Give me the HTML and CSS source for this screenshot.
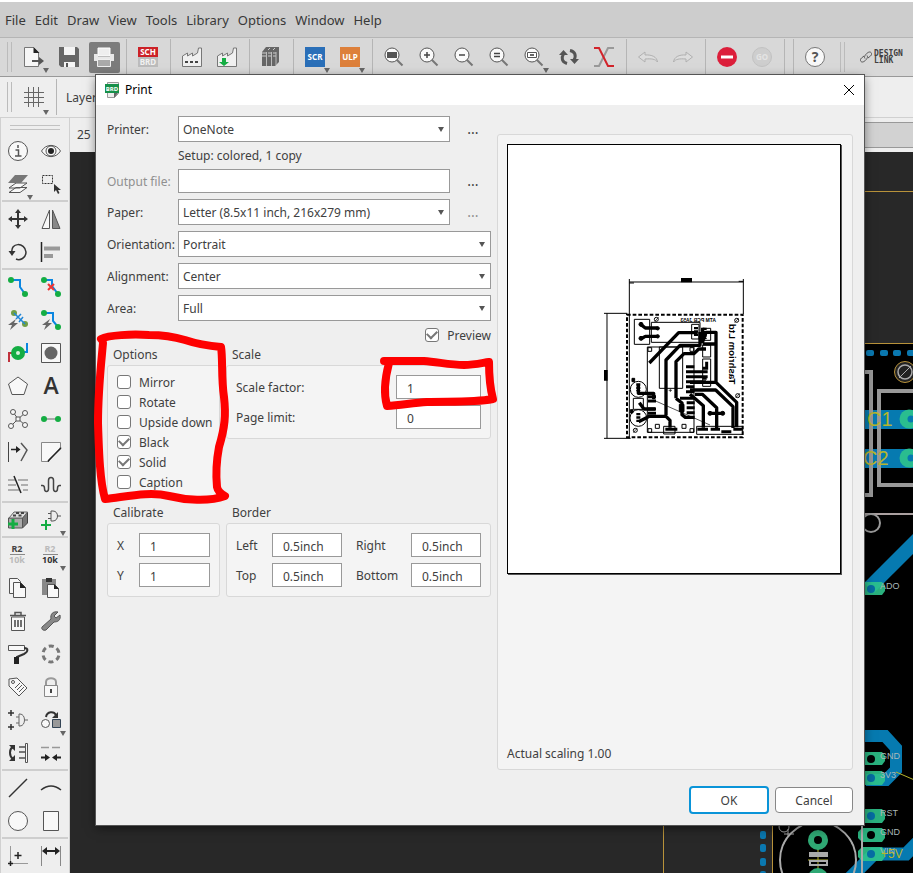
FILE: index.html
```html
<!DOCTYPE html>
<html lang="en">
<head>
<meta charset="utf-8">
<title>Print</title>
<link rel="stylesheet" href="styles.css">
</head>
<body>
<nav class="menubar">
  <a href="#">File</a><a href="#">Edit</a><a href="#">Draw</a><a href="#">View</a><a href="#">Tools</a><a href="#">Library</a><a href="#">Options</a><a href="#">Window</a><a href="#">Help</a>
</nav>

<div class="toolbar">
  <i class="grip"></i>
  <button class="tool more" aria-label="Open"><svg viewBox="0 0 20 20"><path d="M.5.5h9l5 5v14H.5z" fill="#f6f6f6" stroke="#777"/><path d="M9.500 0l6 6h-6z" fill="#222"/><path d="M8 14h9" stroke="#555" stroke-width="2"/><path d="M15 10l5 4-5 4z" fill="#555"/></svg></button>
  <button class="tool" aria-label="Save"><svg viewBox="0 0 20 20"><path d="M0 0h18l2 2v18H2l-2-2z" fill="#666"/><path d="M5 0h11v8H5zM5 15h11v5H5z" fill="#f4f4f4"/><path d="M7 16h2v4H7z" fill="#555"/></svg></button>
  <button class="tool pressed" aria-label="Print"><svg viewBox="0 0 20 20"><path d="M4 1h12v8H4z" fill="#eee" stroke="#fff"/><path d="M0 7h4v3h12V7h4v7H0z" fill="#e8e8e8"/><path d="M3.500 12.500h13v7h-13z" fill="#aaa" stroke="#eee"/></svg></button>
  <i class="sep"></i>
  <button class="tool" aria-label="Schematic"><svg viewBox="0 0 20 20"><path d="M0 0h20v10H0z" fill="#cc2127"/><path d="M0 10h20v10H0z" fill="#bcbcbc"/><text class="tiny" x="10" y="8" fill="#fff">SCH</text><text class="tiny" x="10" y="18" fill="#f2f2f2">BRD</text></svg></button>
  <i class="sep"></i>
  <button class="tool" aria-label="Manufacturing"><svg viewBox="0 0 20 20"><path d="M.5 19.500V9l5-3v3l5-3v3l5-3 1-5h3v18.500z" fill="#f0f0f0" stroke="#777"/><path d="M3 15h14" stroke="#444" stroke-width="2" stroke-dasharray="3 2"/></svg></button>
  <button class="tool" aria-label="Export"><svg viewBox="0 0 20 20"><path d="M.5 19.500V9l5-3v3l5-3v3l5-3 1-5h3v18.500z" fill="#f0f0f0" stroke="#777"/><path d="M5 11h4v4h3l-5 4-5-4h3z" fill="#14ad43"/></svg></button>
  <i class="sep"></i>
  <button class="tool" aria-label="Library"><svg viewBox="0 0 20 20"><path d="M1 5l4-5h13v15l-4 4H1z" fill="#666"/><path d="M1 6h4M7 6h3M12 6h3M1 9h4M7 9h3M12 9h3M7 3l2-2M12 3l2-2" stroke="#ccc"/><path d="M5.500 5v14M10.500 5v14M15 5v13" stroke="#bbb"/></svg></button>
  <i class="sep"></i>
  <button class="tool more" aria-label="Script"><svg viewBox="0 0 20 20"><path d="M0 0h20v20H0z" fill="#2a6fb8"/><text class="tiny" x="10" y="13" fill="#fff">SCR</text></svg></button>
  <button class="tool more" aria-label="User program"><svg viewBox="0 0 20 20"><path d="M0 0h20v20H0z" fill="#dd803b"/><text class="tiny" x="10" y="13" fill="#fff">ULP</text></svg></button>
  <i class="sep"></i>
  <button class="tool" aria-label="Zoom to fit"><svg viewBox="0 0 20 20"><path d="M13 13l5.500 5.500" stroke="#777" stroke-width="2"/><circle cx="8" cy="8" r="7" fill="#fafafa" stroke="#555"/><path d="M3 5h10v6H3z" fill="#555"/></svg></button>
  <button class="tool" aria-label="Zoom in"><svg viewBox="0 0 20 20"><path d="M13 13l5.500 5.500" stroke="#777" stroke-width="2"/><circle cx="8" cy="8" r="7" fill="#fafafa" stroke="#555"/><path d="M5 8h6M8 5v6" stroke="#444" stroke-width="1.500"/></svg></button>
  <button class="tool" aria-label="Zoom out"><svg viewBox="0 0 20 20"><path d="M13 13l5.500 5.500" stroke="#777" stroke-width="2"/><circle cx="8" cy="8" r="7" fill="#fafafa" stroke="#555"/><path d="M5 8h6" stroke="#444" stroke-width="1.500"/></svg></button>
  <button class="tool" aria-label="Redraw"><svg viewBox="0 0 20 20"><path d="M13 13l5.500 5.500" stroke="#777" stroke-width="2"/><circle cx="8" cy="8" r="7" fill="#fafafa" stroke="#555"/><path d="M5 6.500h6M5 9.500h6" stroke="#444" stroke-width="1.500"/></svg></button>
  <button class="tool more" aria-label="Zoom select"><svg viewBox="0 0 20 20"><path d="M13 13l5.500 5.500" stroke="#777" stroke-width="2"/><circle cx="8" cy="8" r="7" fill="#fafafa" stroke="#555"/><path d="M3.500 5.500h9v5h-9z" fill="#fff" stroke="#555"/><path d="M6 7h4v2H6z" fill="#666"/></svg></button>
  <button class="tool" aria-label="Refresh"><svg viewBox="0 0 20 20"><path d="M8 16.500C3 15 2 11 4.500 7M11 3.500c5 1 6.500 5 4 9.500" fill="none" stroke="#555" stroke-width="3"/><path d="M0 8l4.500-5L9 8zM11 12h9l-4.500 5z" fill="#555"/></svg></button>
  <button class="tool" aria-label="Cross probe"><svg viewBox="0 0 20 20"><path d="M0 19h5L14 1h6" fill="none" stroke="#999" stroke-width="2"/><path d="M0 1h5l9 18h6" fill="none" stroke="#d2232a" stroke-width="2"/></svg></button>
  <i class="sep"></i>
  <button class="tool" aria-label="Undo"><svg viewBox="0 0 20 20"><path d="M.5 10L7 5v3c7-.5 12 2 12.500 7-2-3-6-3.500-12.500-3v3z" fill="#ddd" stroke="#b0b0b0"/></svg></button>
  <button class="tool" aria-label="Redo"><svg viewBox="0 0 20 20"><path d="M19.500 10L13 5v3C6 7.500 1 10 .5 15c2-3 6-3.500 12.500-3v3z" fill="#ddd" stroke="#b0b0b0"/></svg></button>
  <i class="sep"></i>
  <button class="tool" aria-label="Stop"><svg viewBox="0 0 20 20"><circle cx="10" cy="10" r="10" fill="#dc1f3b"/><path d="M4 10h12" stroke="#fff" stroke-width="3"/></svg></button>
  <button class="tool" aria-label="Go"><svg viewBox="0 0 20 20"><circle cx="10" cy="10" r="9.500" fill="#cecece" stroke="#c2c2c2"/><text class="tiny go" x="10" y="13">GO</text></svg></button>
  <i class="sep"></i>
  <i class="sep"></i>
  <button class="tool" aria-label="Help"><svg viewBox="0 0 20 20"><circle cx="10" cy="10" r="9.500" fill="#f8f8f8" stroke="#777"/><text class="query" x="10" y="15">?</text></svg></button>
  <i class="grip last"></i>
  <button class="designlink"><svg viewBox="0 0 12 12"><path d="M5 7.500c-2-2 2.500-6.500 4.500-6.500s3 2 1 4L8 7M7 4.500c2 2-2.500 6.500-4.500 6.500s-3-2-1-4L4 5" fill="none" stroke="#555"/></svg><span>DESIGN<br>LINK</span></button>
</div>

<div class="parambar">
  <i class="grip"></i>
  <button class="tool more" aria-label="Grid"><svg viewBox="0 0 20 20"><path d="M4.500 0v20M9.500 0v20M14.500 0v20M0 5.500h20M0 10.500h20M0 15.500h20" stroke="#666" fill="none"/></svg></button>
  <i class="sep"></i>
  <span class="layer">Layer:</span>
</div>

<div class="main">
<aside class="sidebar">
  <i class="hgrip"></i>
  <div class="group">
    <button aria-label="Info"><svg viewBox="0 0 20 20"><circle cx="10" cy="10" r="9.500" class="w"/><path d="M10 4v3M7.500 9H10.500v6M7 15h6.500" fill="none" stroke="#555" stroke-width="1.500"/></svg></button>
    <button aria-label="Show"><svg viewBox="0 0 20 20"><path d="M.5 10C5 2.500 15 2.500 19.500 10 15 17.500 5 17.500.5 10z" class="w"/><circle cx="10" cy="10" r="5" class="w"/><circle cx="10" cy="10" r="3" fill="#222"/></svg></button>
    <button class="more" aria-label="Layers"><svg viewBox="0 0 20 20"><path d="M1 18.500l7-5h11l-7 5zM1 14l7-5h11l-7 5z" class="w"/><path d="M0 9l7-8h13l-7 8z" fill="#777"/></svg></button>
    <button aria-label="Group"><svg viewBox="0 0 20 20"><path d="M1.500 1.500h10v8h-10z" fill="none" stroke="#333" stroke-dasharray="2 1"/><path d="M13 10v8l2-2 2 4 1.500-1-1.500-3h3z" fill="#333"/></svg></button>
  </div>
  <div class="group">
    <button aria-label="Move"><svg viewBox="0 0 20 20"><path d="M10 2v16M2 10h16" stroke="#333" stroke-width="2"/><path d="M10 0l3 4H7zM10 20l3-4H7zM0 10l4-3v6zM20 10l-4-3v6z" fill="#333"/></svg></button>
    <button aria-label="Mirror"><svg viewBox="0 0 20 20"><path d="M8.500 1v18.500H1z" class="w"/><path d="M11.500 1v18.500H19z" fill="#888" stroke="#555"/></svg></button>
    <button aria-label="Rotate"><svg viewBox="0 0 20 20"><path d="M4 11C2 0 17 0 18 10c0 6-6 9-10 7" fill="none" stroke="#333" stroke-width="1.500"/><path d="M.5 9h7L4 14z" fill="#333"/></svg></button>
    <button aria-label="Align"><svg viewBox="0 0 20 20"><path d="M.5 0v20" stroke="#222" stroke-width="1.500"/><path d="M3 4.500h16v4H3zM3 12h9v4H3z" fill="#999"/></svg></button>
  </div>
  <div class="group">
    <button aria-label="Route"><svg viewBox="0 0 20 20"><path d="M3 3h9v7l5 7" class="b"/><circle cx="3" cy="3" r="3" class="g"/><circle cx="17" cy="17" r="3" class="g"/></svg></button>
    <button aria-label="Ripup"><svg viewBox="0 0 20 20"><path d="M3 3h8v6l6 8" class="b"/><circle cx="3" cy="3" r="3" class="g"/><circle cx="17" cy="17" r="3" class="g"/><path d="M7 7l6 6M13 7l-6 6" stroke="#e33" stroke-width="2"/></svg></button>
    <button aria-label="Autoroute"><svg viewBox="0 0 20 20"><circle cx="6" cy="3" r="3" fill="#6f9e46"/><circle cx="17" cy="14" r="3" fill="#6f9e46"/><path d="M6 3l11 11M8 9l5-5M11 12l4-5" stroke="#1f86d8" stroke-width="1.500"/><path d="M8 9l-8 6h4l-2 5 8-7H6z" fill="#666"/></svg></button>
    <button aria-label="Fast route"><svg viewBox="0 0 20 20"><path d="M3 3h9v8l5 6" class="b"/><circle cx="3" cy="3" r="3" class="g"/><circle cx="17" cy="17" r="3" class="g"/><path d="M9 9l-8 6h4l-2 5 8-7H7z" fill="#666"/></svg></button>
    <button aria-label="Via"><svg viewBox="0 0 20 20"><path d="M1 19v-9h6" fill="none" stroke="#c0323c" stroke-width="2"/><path d="M13 9h6V0" class="b"/><circle cx="10" cy="10" r="7" fill="#14ad43"/><circle cx="10" cy="10" r="2" fill="#d8f0dd"/></svg></button>
    <button aria-label="Hole"><svg viewBox="0 0 20 20"><path d="M.5.5h19v19H.5z" class="w"/><circle cx="10" cy="10" r="6.500" fill="#666"/></svg></button>
    <button aria-label="Polygon"><svg viewBox="0 0 20 20"><path d="M10 1l9.500 7L16 18.500H4L.5 8z" class="w"/></svg></button>
    <button aria-label="Text"><svg viewBox="0 0 20 20"><text class="big" x="10" y="18">A</text></svg></button>
    <button aria-label="Ratsnest"><svg viewBox="0 0 20 20"><path d="M5 3l5 7 7-6M3 17l7-7 7 6" fill="none" stroke="#555"/><circle cx="5" cy="3" r="2.500" class="w"/><circle cx="17" cy="4" r="2.500" class="w"/><circle cx="3" cy="17" r="2.500" class="w"/><circle cx="17" cy="16" r="2.500" class="w"/><path d="M8 8h4v4H8z" class="w"/></svg></button>
    <button aria-label="Signal"><svg viewBox="0 0 20 20"><path d="M3 10h14" stroke="#aaa" stroke-width="2"/><circle cx="3" cy="10" r="3" class="g"/><circle cx="17" cy="10" r="3" class="g"/></svg></button>
    <button aria-label="Split"><svg viewBox="0 0 20 20"><path d="M.5 0v20" stroke="#444"/><path d="M13 1l6 7-6 11" fill="none" stroke="#555" stroke-width="1.500"/><path d="M3 7.500h7" stroke="#222" stroke-width="1.500"/><path d="M8 4l4.500 3.500L8 11z" fill="#222"/></svg></button>
    <button aria-label="Miter"><svg viewBox="0 0 20 20"><path d="M.5 19.500V.5h19v5l-12 14z" fill="#f8f8f8" stroke="#888"/><path d="M19.500 5.500v1L8 18l-1 1.500" fill="none" stroke="#222" stroke-width="1.500"/></svg></button>
    <button aria-label="Break"><svg viewBox="0 0 20 20"><path d="M0 5h7M10 5h10M0 10h8M13 10h7M0 15h11M15 15h5" stroke="#999" stroke-width="1.500"/><path d="M6 1l7 17" stroke="#222" stroke-width="1.500"/></svg></button>
    <button aria-label="Meander"><svg viewBox="0 0 20 20"><path d="M0 10.500h1.500q2 0 2 3t2 3 2-3v-8q0-3 2.500-3t2.500 3v8q0 3 2 3t2-3 2-3H20" fill="none" stroke="#444" stroke-width="1.500"/></svg></button>
  </div>
  <div class="group">
    <button aria-label="Add part"><svg viewBox="0 0 20 20"><path d="M14.500 8l5-6v11l-5 5z" fill="#777" stroke="#444"/><path d="M.5 8h14v10H.5z" fill="#aaa" stroke="#555"/><path d="M1 8l5-6h13.500l-5 6z" fill="#ddd" stroke="#666"/><path d="M5 5.500h3M10.500 5.500h3M8 3h3M13 3h3" stroke="#444" stroke-width="2"/><path d="M5 9v10M0 14h10" stroke="#14ad43" stroke-width="3"/></svg></button>
    <button class="more" aria-label="Add gate"><svg viewBox="0 0 20 20"><path d="M10 1h2c6 0 6 10 0 10h-2zM7 3.500h3M7 8.500h3M17 6h3" fill="none" stroke="#555"/><path d="M5 10v10M0 15h10" stroke="#14ad43" stroke-width="2"/></svg></button>
  </div>
  <div class="group">
    <button aria-label="Name"><svg viewBox="0 0 20 20"><text class="part" x="9" y="7" fill="#444">R2</text><path d="M2 9.500h15" stroke="#888"/><text class="part" x="9" y="18" fill="#bbb">10k</text></svg></button>
    <button class="more" aria-label="Value"><svg viewBox="0 0 20 20"><text class="part" x="9" y="7" fill="#bbb">R2</text><path d="M2 9.500h15" stroke="#888"/><text class="part" x="9" y="18" fill="#333">10k</text></svg></button>
    <button aria-label="Copy"><svg viewBox="0 0 20 20"><path d="M1.500.5h8l3 3v12h-11z" class="w"/><path d="M5.500 4.500h7l5 5v10h-12z" class="w"/><path d="M12 4l6 6h-6z" fill="#222"/></svg></button>
    <button aria-label="Paste"><svg viewBox="0 0 20 20"><path d="M1 1h14v16H1z" fill="#888"/><path d="M5 0h6v4H5z" fill="#333"/><path d="M6.500 6.500h7l4 4v9h-11z" class="w"/><path d="M13 6l5 5h-5z" fill="#222"/></svg></button>
    <button aria-label="Delete"><svg viewBox="0 0 20 20"><path d="M3.500 6h13v13.500h-13z" class="w"/><path d="M2 4.500h16M7 4V1.500h6V4" fill="none" stroke="#555" stroke-width="1.500"/><path d="M7 9v7M10 9v7M13 9v7" stroke="#444" stroke-width="1.500"/></svg></button>
    <button aria-label="Change"><svg viewBox="0 0 20 20"><path d="M1 16L10 8C9 3 12 0 17 1l-4 4 2 2 4-3c1 5-2 7-6 7L5 19c-3 1-5-1-4-3z" fill="#888" stroke="#555"/></svg></button>
    <button aria-label="Paint"><svg viewBox="0 0 20 20"><path d="M.5 1.500h16v5H.5z" class="w"/><path d="M16 4c5 0 4 4 0 6l-7 3v2" fill="none" stroke="#333" stroke-width="2"/><path d="M6 13h5v7H6z" fill="#222"/></svg></button>
    <button aria-label="Optimize"><svg viewBox="0 0 20 20"><circle cx="10" cy="10" r="8" fill="none" stroke="#777" stroke-width="3" stroke-dasharray="5 3.378" stroke-dashoffset="-1.700"/></svg></button>
    <button aria-label="Tag"><svg viewBox="0 0 20 20"><path d="M1 2l8-1 10 10-8 8L1 9z" class="w"/><circle cx="5" cy="5" r="1.500" class="w"/><path d="M7 11l5-5M9 13l5-5M11 15l5-5" stroke="#555"/></svg></button>
    <button aria-label="Lock"><svg viewBox="0 0 20 20"><path d="M5 9V5c0-5 10-5 10 0v4" fill="none" stroke="#999" stroke-width="2"/><path d="M3.500 8.500h13v11h-13z" fill="#f8f8f8" stroke="#888"/><path d="M10 12v4" stroke="#444" stroke-width="2"/></svg></button>
    <button aria-label="Pin swap"><svg viewBox="0 0 20 20"><path d="M3 0v6M0 3h6M3 14v6M0 17h6" stroke="#333" stroke-width="1.500"/><path d="M11 4h1c6 0 6 12 0 12h-1zM8 7h3M8 13h3M17 10h3" fill="none" stroke="#666"/></svg></button>
    <button class="more" aria-label="Replace"><svg viewBox="0 0 20 20"><path d="M5 7c1-6 8-6 10-2" fill="none" stroke="#333" stroke-width="2"/><path d="M17 2v6h-6z" fill="#333"/><circle cx="4.500" cy="13.500" r="4" class="w"/><path d="M11.500 9.500h8v8h-8z" fill="#999" stroke="#345"/></svg></button>
    <button aria-label="Gate swap"><svg viewBox="0 0 20 20"><path d="M5 4c-4 2-4 9 0 12" fill="none" stroke="#333" stroke-width="2"/><path d="M1 2h6v6zM1 18h6v-6z" fill="#333"/><path d="M11 4h6M11 9h6M11 15h6" stroke="#777" stroke-width="2"/><path d="M17.500.5h2v19h-2z" class="w"/></svg></button>
    <button aria-label="Gap"><svg viewBox="0 0 20 20"><path d="M0 4.500h8M11 4.500h8" stroke="#999" stroke-width="1.500"/><path d="M0 14.500h5M15 14.500h5" stroke="#222" stroke-width="2"/><path d="M4 11l5 3.500L4 18zM16 11l-5 3.500 5 3.500z" fill="#222"/></svg></button>
  </div>
  <div class="group">
    <button aria-label="Line"><svg viewBox="0 0 20 20"><path d="M1 19L19 1" stroke="#333" stroke-width="1.500"/></svg></button>
    <button aria-label="Arc"><svg viewBox="0 0 20 20"><path d="M0 12q10-8 20 0" fill="none" stroke="#333" stroke-width="1.500"/></svg></button>
    <button aria-label="Circle"><svg viewBox="0 0 20 20"><circle cx="10" cy="10" r="9.500" class="w"/></svg></button>
    <button aria-label="Rectangle"><svg viewBox="0 0 20 20"><path d="M2.500.5h15v19h-15z" class="w"/></svg></button>
  </div>
  <div class="group">
    <button aria-label="Mark"><svg viewBox="0 0 20 20"><path d="M2.500 0v20M0 17.500h20" stroke="#999"/><path d="M10 6v7M6.500 9.500h7M2.500 15v5M0 17.500h5" stroke="#222" stroke-width="1.500"/></svg></button>
    <button aria-label="Dimension"><svg viewBox="0 0 20 20"><path d="M.5 0v20M19.500 0v20" stroke="#888"/><path d="M4 5h12" stroke="#222" stroke-width="2"/><path d="M1 5l5-4v8zM19 5l-5-4v8z" fill="#222"/></svg></button>
  </div>
</aside>
<section class="work">
  <div class="coords"><span>25</span><i></i></div>
  <svg class="canvas" aria-hidden="true"><g transform="translate(-70 -152)">
    <path d="M860 343h600v900H773V822h87z" fill="#000"/>
    <path d="M800 191.500h600M800 343.500h600M663.500 800v400M772.500 800v400" stroke="#b8923a"/>
    <g fill="#0a78b0"><rect x="866" y="350" width="8" height="6" rx="2"/><rect x="880" y="350" width="8" height="6" rx="2"/><rect x="893" y="350" width="8" height="6" rx="2"/><rect x="907" y="350" width="8" height="6" rx="2"/><rect x="760" y="831" width="6" height="8" rx="2"/><rect x="760" y="844" width="6" height="8" rx="2"/><rect x="760" y="858" width="6" height="8" rx="2"/><rect x="760" y="871" width="6" height="8" rx="2"/></g>
    <circle cx="905" cy="372" r="10.500" fill="#222" stroke="#b8923a"/><circle cx="905" cy="372" r="7" fill="none" stroke="#aaa" stroke-width="1.500"/><path d="M899 378l12-12" stroke="#aaa"/>
    <path d="M860 410h140v19H860zM860 449h140v19H860z" fill="#067ab0"/>
    <path d="M860 372h11v123h-11M1000 391H879v94h121" fill="none" stroke="#999" stroke-width="4"/>
    <circle cx="909" cy="419" r="9.500" class="pad"/><circle cx="909" cy="458" r="9.500" class="pad"/><circle cx="911" cy="419" r="3.500" fill="#067ab0"/><circle cx="911" cy="458" r="3.500" fill="#067ab0"/>
    <text class="netname" x="867" y="426">C1</text><text class="netname" x="863" y="465">C2</text>
    <path d="M860 514h140" stroke="#aaa0a0" stroke-width="2"/><circle cx="871" cy="523" r="9" fill="none" stroke="#999" stroke-width="2"/>
    <path d="M869 588l60-60" stroke="#067ab0" stroke-width="14"/>
    <path d="M860 736h25l11 12v22l-10 10h-20" fill="none" stroke="#067ab0" stroke-width="12"/>
    <path d="M840 888l34-34h32l20-20" fill="none" stroke="#067ab0" stroke-width="13"/>
    <path d="M896 772l30 13" stroke="#b7b52d"/>
    <path d="M858 582h24l3 4v5l-3 4h-24zM862 752h20l3 4v5l-3 4h-20zM862 771h20l3 4v6l-3 4h-20zM862 809h20l3 4v6l-3 4h-20zM862 828h20l3 4v6l-3 4h-20l-4-4v-6zM862 847h20l3 4v6l-3 4h-20l-4-4v-6z" class="pad"/>
    <g fill="#066ca2"><circle cx="871" cy="589" r="4"/><circle cx="871" cy="778" r="4"/><circle cx="871" cy="816" r="4"/><circle cx="871" cy="854" r="4"/></g>
    <circle cx="871" cy="759" r="4"/><circle cx="871" cy="835" r="4"/>
    <g class="pinname"><text x="880" y="589">ADO</text><text x="880" y="759">GND</text><text x="880" y="778">3V3</text><text x="880" y="816">RST</text><text x="880" y="835">GND</text><text x="880" y="854">VIN</text></g>
    <text class="netname small" x="881" y="858">+5V</text>
    <circle cx="818" cy="860" r="38" fill="none" stroke="#aaa" stroke-width="2"/><path d="M862 820v100" stroke="#aaa" stroke-width="2"/>
    <circle cx="784" cy="827" r="5" fill="none" stroke="#aaa"/><path d="M784 834h10M788 829v8" stroke="#aaa"/>
    <path d="M818 848v30M808 860h20" stroke="#b7b52d"/><path d="M809 852h19v5h-19z" fill="#aaa"/><path d="M810 861h17v4h-17z" fill="none" stroke="#aaa" stroke-width="2"/>
    <circle cx="818" cy="840" r="7" fill="none" stroke="#2fa874" stroke-width="6"/><circle cx="818" cy="878" r="7" fill="none" stroke="#2fa874" stroke-width="6"/>
  </g></svg>
</section>
</div>

<div class="dialog" role="dialog" aria-label="Print">
  <header class="title">
    <svg viewBox="0 0 14 16"><path d="M2.500.5h11v11l-4 4h-7z" fill="#eee" stroke="#999"/><path d="M0 2h14v9H0z" fill="#17904a"/><text class="brd" x="7" y="9">BRD</text><path d="M9 11h4l-4 5z" fill="#666"/></svg>
    <span>Print</span>
    <button class="close" aria-label="Close"><svg viewBox="0 0 10 10"><path d="M0 0l10 10M10 0L0 10" stroke="#000"/></svg></button>
  </header>
  <div class="body">
    <form class="left">
      <div class="fields">
        <label for="printer">Printer:</label><div class="pick"><select id="printer"><option>OneNote</option></select></div><button type="button" class="dots">...</button>
        <span class="setup">Setup: colored, 1 copy</span>
        <label for="out" class="dim">Output file:</label><input id="out" type="text"><button type="button" class="dots">...</button>
        <label for="paper">Paper:</label><div class="pick"><select id="paper"><option>Letter (8.5x11 inch, 216x279 mm)</option></select></div><button type="button" class="dots dim">...</button>
        <label for="orient">Orientation:</label><div class="pick wide"><select id="orient"><option>Portrait</option></select></div>
        <label for="align">Alignment:</label><div class="pick wide"><select id="align"><option>Center</option></select></div>
        <label for="area">Area:</label><div class="pick wide"><select id="area"><option>Full</option></select></div>
      </div>
      <label class="check preview"><input type="checkbox" checked><span>Preview</span></label>
      <div class="boxes">
        <section><h2>Options</h2>
          <div class="box options">
            <label class="check"><input type="checkbox"><span>Mirror</span></label>
            <label class="check"><input type="checkbox"><span>Rotate</span></label>
            <label class="check"><input type="checkbox"><span>Upside down</span></label>
            <label class="check"><input type="checkbox" checked><span>Black</span></label>
            <label class="check"><input type="checkbox" checked><span>Solid</span></label>
            <label class="check"><input type="checkbox"><span>Caption</span></label>
          </div></section>
        <section><h2>Scale</h2>
          <div class="box scale">
            <label for="factor">Scale factor:</label><input id="factor" type="text" value="1">
            <label for="limit">Page limit:</label><input id="limit" type="text" value="0">
          </div></section>
        <section><h2>Calibrate</h2>
          <div class="box calibrate">
            <label for="cx">X</label><input id="cx" type="text" value="1">
            <label for="cy">Y</label><input id="cy" type="text" value="1">
          </div></section>
        <section><h2>Border</h2>
          <div class="box border">
            <label for="bl">Left</label><input id="bl" type="text" value="0.5inch">
            <label for="br">Right</label><input id="br" type="text" value="0.5inch">
            <label for="bt">Top</label><input id="bt" type="text" value="0.5inch">
            <label for="bb">Bottom</label><input id="bb" type="text" value="0.5inch">
          </div></section>
      </div>
    </form>
    <section class="box page">
      <svg class="sheet" viewBox="0 0 332 428" role="img" aria-label="Page preview"><g transform="translate(82 120) scale(.33333)" fill="none" stroke="#000" stroke-width="3">
        <path d="M118 42v478M460 42v105M118 51h342M42 145h70M51 145v375M42 520h80M118 54h14M446 49h14"/>
        <path d="M273 39h33v13h-33zM42 315h11v32H42z" fill="#000" stroke="none"/>
        <path d="M111 149h347v368H111z" stroke-width="6" stroke-dasharray="11 6"/>
        <path d="M133 163h46v75h-46zM184 172h146v60H184zM172 246h140v256H172zM208 246h70v124h-70zM305 178h22v44h-22zM338 190h24v36h-24zM338 240h24v36h-24zM338 282h24v82h-24zM130 400h30v33h-30zM196 478h12v12h-12zM276 478h12v12h-12zM221 484h34v23h-34zM320 484h138v24H320zM174 248h11v11h-11zM300 248h11v11h-11zM174 491h11v11h-11zM300 491h11v11h-11z"/>
        <circle cx="145" cy="373" r="24"/><circle cx="145" cy="459" r="25"/>
        <circle cx="199" cy="163" r="6"/><circle cx="440" cy="166" r="6"/><circle cx="443" cy="392" r="6"/><circle cx="136" cy="496" r="6"/>
        <path d="M194 170l12-14M434 173l12-14M437 399l12-14M130 503l12-14M190 405l170 75M236 376h10M241 371v10" stroke-width="2"/>
        <g stroke-width="10" stroke-linejoin="round"><path d="M152 178l14 11h37M152 222l14-8h37M178 294l88-91h57M228 450V285l42-44h60v-40M258 400V290l24-24h30l14-14h22M258 400l18 14v35l10 8h28M338 188v42l10-28h30v148M338 237h40M300 352h78l62 60v75M300 375h77l52 50v64M300 388l40 34v66M315 388h22l43 40v62M360 445h40M145 357v28h46v18M148 413l14 19h34M146 470l32-16h50l12 12v22"/></g>
        <g stroke-width="9"><path d="M288 305h25M288 320h65M288 335h65M288 350h60M288 365h25M288 380h25M270 400h42M174 395h24M174 408h24M174 432h24M174 445h24M290 413h24M290 428h24M290 443h24M226 493h36M322 493h32M362 493h28M394 500h30M430 493h28M338 310h12v-20M338 340h12"/></g>
        <path d="M318 186v30M344 188v34M145 355v24M145 444v28" stroke-width="12" stroke-dasharray="7 3"/>
        <g fill="#000"><circle cx="153" cy="178" r="6"/><circle cx="153" cy="220" r="6"/><circle cx="203" cy="190" r="5"/><circle cx="203" cy="214" r="5"/><circle cx="360" cy="445" r="6"/><circle cx="398" cy="445" r="6"/><path d="M268 418h14v22h-14zM126 340h8v10h-8zM121 434h8v10h-8z"/></g>
        <text class="boardtext" transform="translate(378 171) scale(-1 1)" font-size="15">ATM PCB JA53</text>
        <text class="boardtext" transform="translate(416 358) rotate(-90) scale(1 -1)" font-size="29">Tashriom Ltd</text>
      </g></svg>
      <p>Actual scaling 1.00</p>
    </section>
  </div>
  <footer><button class="ok">OK</button><button>Cancel</button></footer>
  <svg class="marks" viewBox="0 0 410 200" aria-hidden="true"><g transform="translate(-90 -320)" fill="none" stroke="#fe0000" stroke-linecap="round" stroke-linejoin="round"><path d="M101 339c8-4 30-5 48-4 14 0 26 2 36 5 12 4 24 6 36 7 2 12 0 30 3 50 2 18 1 30-5 50-3 16-3 30-2 40 1 5 4 7 8 9-16 6-40 4-56 0-20-5-44 1-64 3-5-18-6-44-7-76 0-32 3-58 5-80" stroke-width="8"/><path d="M384 361h40c14 1 26 4 40 4 10 0 18-2 25-3 0 12 1 26 4 37-22 4-48 2-66 3-14 1-26 3-40 4-4-14-2-28 2-43" stroke-width="8"/></g></svg>
</div>
</body>
</html>
```
FILE: styles.css
```css
* { box-sizing: border-box; }
body {
  margin: 0;
  height: 100vh;
  display: flex;
  flex-direction: column;
  overflow: hidden;
  position: relative;
  background: #eee;
  color: #404040;
  font: 12px/16px "Noto Sans", "Liberation Sans", sans-serif;
}
button, input, select { font: inherit; color: inherit; }
button { border: 0; background: none; padding: 0; }
h2, p { margin: 0; font-size: 12px; font-weight: normal; }
i { display: block; flex: none; }

.menubar {
  flex: none;
  height: 38px;
  padding: 0 5px;
  display: flex;
  align-items: center;
  gap: 9px;
  border-top: 2px solid #fff;
  border-bottom: 1px solid #b5b5b5;
  background: #cdcdcd;
  font-size: 13px;
}
.menubar a { color: #383838; text-decoration: none; }

.toolbar, .parambar { flex: none; display: flex; align-items: center; background: #d8d8d8; }
.toolbar { height: 39px; border-bottom: 1px solid #999; }
.parambar { height: 41px; background: #eee; border-bottom: 1px solid #d0d0d0; }
.grip { width: 5px; height: 30px; margin: 0 5px 0 7px; border: solid #bbb; border-width: 0 1px; }
.grip.last { margin: 0 15px 0 7px; }
.sep { width: 9px; height: 36px; background: linear-gradient(#b5b5b5, #b5b5b5) 4px 0 / 1px 100% no-repeat; }
.tool { position: relative; flex: none; width: 31px; height: 31px; margin: 0 2px; padding: 0 5px; }
.tool svg, .group svg { display: block; width: 20px; height: 20px; overflow: visible; }
.pressed { background: #7c7c7c; border-radius: 2px; }
.more::after {
  content: "";
  position: absolute;
  right: 1px;
  bottom: 0;
  border: 3px solid transparent;
  border-top: 5px solid #666;
  border-bottom: 0;
}
.parambar .more::after { bottom: -2px; }
.tiny { font: bold 8px "Noto Sans", sans-serif; text-anchor: middle; }
.part { font: bold 9px "Noto Sans", sans-serif; text-anchor: middle; }
.go { fill: #e4e4e4; }
.query { font: bold 14px "Noto Sans", sans-serif; text-anchor: middle; fill: #555; }
.big { font: 600 23px "Open Sans", sans-serif; text-anchor: middle; fill: #333; }
.designlink { display: flex; align-items: center; gap: 2px; text-align: left; font: bold 8px/7px "DejaVu Sans Mono", monospace; white-space: nowrap; }
.designlink svg { width: 12px; height: 12px; }
.layer { padding: 2px 0 0 5px; }

.main { flex: 1; min-height: 0; display: flex; }
.sidebar { flex: none; width: 70px; padding: 7px 1px 0; border-left: 1px solid #d0d0d0; border-right: 1px solid #d0d0d0; background: #eee; overflow: hidden; }
.hgrip { height: 5px; margin: 0 8px 2px; border: solid #c2c2c2; border-width: 1px 0; }
.group { display: grid; grid-template-columns: 33px 33px; border-top: 2px solid #cecece; }
.group button { position: relative; height: 33px; padding: 6px; }
.group .more::after { right: 2px; }
.hgrip + .group { border-top-color: transparent; }
.w { fill: #f8f8f8; stroke: #555; }
.g { fill: #14ad43; }
.b { fill: none; stroke: #0b86e0; stroke-width: 2; }

.work { flex: 1; min-width: 0; display: flex; flex-direction: column; }
.coords { flex: none; height: 34px; padding: 3px 0 4px 7px; display: flex; align-items: center; gap: 20px; }
.coords i { flex: 1; height: 26px; border: solid #999; border-width: 1px 0; background: #d2d2d2; }
.canvas { flex: 1; min-height: 0; width: 100%; background: #282828; }
.pad { fill: #2fc48c; opacity: .9; }
.netname { font: 20px "Liberation Sans", sans-serif; fill: #b7b52d; }
.netname.small { font-size: 12px; }
.pinname { font: 9px "Liberation Sans", sans-serif; fill: #aab8b8; }

.dialog {
  position: absolute;
  top: 75px;
  left: 96px;
  right: 49px;
  background: #efefef;
  outline: 1px solid #555;
  box-shadow: 0 3px 10px rgba(0, 0, 0, .5);
}
.title { height: 30px; padding: 0 10px 0 9px; display: flex; align-items: center; gap: 6px; background: #fff; color: #000; }
.title > svg { width: 14px; height: 16px; }
.brd { font: bold 6px "Noto Sans", sans-serif; text-anchor: middle; fill: #fff; }
.close { margin-left: auto; }
.close svg { display: block; width: 10px; height: 10px; }
.body { display: grid; grid-template-columns: 384px 1fr; gap: 6px; padding: 11px 11px 0; }
.fields { display: grid; grid-template-columns: 71px 272px 41px; row-gap: 6px; align-items: center; }
.box > label[for], .fields label, .check span { padding-top: 2px; white-space: nowrap; }
input[type="text"] { width: 100%; height: 24px; border: 1px solid #999; border-radius: 0; background: #fff; padding: 2px 10px 0; }
.pick { position: relative; }
.pick select { display: block; width: 100%; height: 26px; padding: 2px 4px 0; border: 1px solid #999; border-radius: 0; background: #fff; appearance: none; }
.pick::after { content: ""; position: absolute; right: 6px; top: 11px; border: 3px solid transparent; border-top: 5px solid #555; border-bottom: 0; }
.wide { grid-column: 2 / 4; }
.setup { grid-column: 2 / 4; margin: 0 0 -1px; }
.dots { width: 46px; font-size: 14px; }
.dim { color: #909090; }
.check { display: flex; align-items: center; height: 20px; gap: 8px; }
.check input { appearance: none; flex: none; display: grid; place-items: center; width: 14px; height: 14px; margin: 0; border: 1px solid #777; border-radius: 3px; background: #fff; }
.check input:checked::before { content: ""; width: 8px; height: 5px; margin-top: -3px; border: solid #777; border-width: 0 0 2px 2px; transform: rotate(-45deg); }
.preview { justify-content: flex-end; margin-top: 4px; }
.boxes { display: grid; grid-template-columns: 113px 1fr; column-gap: 6px; }
h2 { height: 20px; padding-left: 6px; line-height: 20px; }
.box { border: 1px solid #d8d8d8; border-radius: 3px; background: #f4f4f4; }
.options { padding: 6px 0 5px 9px; margin-bottom: 5px; }
.scale { display: grid; grid-template-columns: 1fr 85px; gap: 6px; align-items: center; padding: 9px; }
.calibrate { display: grid; grid-template-columns: 22px 1fr; gap: 6px 0; align-items: center; padding: 9px; }
.border { display: grid; grid-template-columns: 36px 70px 1fr 70px; gap: 6px 0; align-items: center; padding: 9px; }
.border label:nth-of-type(even) { padding-left: 14px; }
.page { margin-top: 18px; padding: 9px 11px 7px 9px; display: flex; flex-direction: column; justify-content: space-between; min-height: 636px; }
.sheet { display: block; width: 100%; border: 1px solid #000; background: #fff; box-shadow: 1px 1px 0 #555; }
.boardtext { font-family: "Liberation Sans", sans-serif; font-weight: bold; fill: #000; stroke: none; }
footer { display: flex; justify-content: flex-end; align-items: center; gap: 6px; padding: 16px 11px 11px; }
footer button { width: 78px; height: 26px; padding-top: 2px; border: 1px solid #888; border-radius: 4px; background: #fff; }
footer .ok { width: 80px; height: 28px; border: 2px solid #0a94d8; }
.marks { position: absolute; left: -6px; top: 245px; width: 410px; height: 200px; pointer-events: none; }
```
